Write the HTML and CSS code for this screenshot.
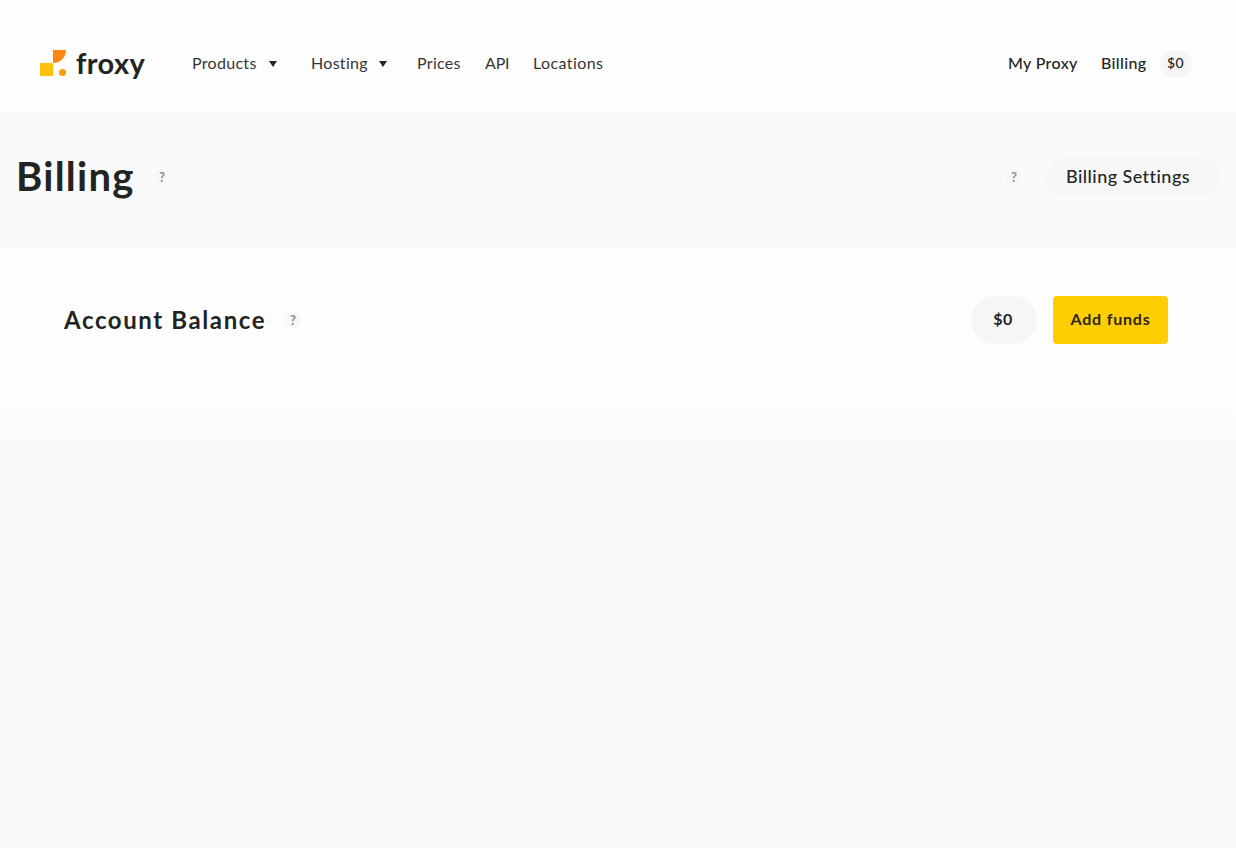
FILE: index.html
```
<!DOCTYPE html>
<html lang="en">
<head>
<meta charset="utf-8">
<title>Billing – Froxy</title>
<link rel="stylesheet" href="styles.css">
</head>
<body>
<header class="header">
  <a class="logo">
    <svg class="logo-mark" viewBox="0 0 27 27" width="27" height="27">
      <path d="M13 0h13c0 7.500-5.500 13-13 13z" fill="#ff860f"/>
      <path d="M0 13h13.300v13H0z" fill="#ffc10a"/>
      <circle cx="22.500" cy="22.500" r="3.600" fill="#ff9c0c"/>
    </svg>
    <span class="logo-name">froxy</span>
  </a>
  <nav class="nav">
    <a class="nav-products">Products</a>
    <svg class="caret caret-products" viewBox="0 0 8 6"><path d="M0 0h8L4 6z"/></svg>
    <a class="nav-hosting">Hosting</a>
    <svg class="caret caret-hosting" viewBox="0 0 8 6"><path d="M0 0h8L4 6z"/></svg>
    <a class="nav-prices">Prices</a>
    <a class="nav-api">API</a>
    <a class="nav-locations">Locations</a>
  </nav>
  <div class="account">
    <a class="account-proxy">My Proxy</a>
    <a class="account-billing">Billing</a>
    <span class="account-balance">$0</span>
  </div>
</header>
<main>
  <section class="title-bar">
    <h1>Billing</h1>
    <span class="hint">?</span>
    <span class="hint hint-settings">?</span>
    <a class="settings">Billing Settings</a>
  </section>
  <section class="balance">
    <h2>Account Balance</h2>
    <span class="hint">?</span>
    <span class="amount">$0</span>
    <button class="add-funds">Add funds</button>
  </section>
</main>
</body>
</html>
```
FILE: styles.css
```
* { box-sizing: border-box; }
body {
  margin: 0;
  min-height: 848px;
  background: #fafafa;
  color: #222423;
  font-family: Lato, "Open Sans", sans-serif;
  white-space: nowrap;
}
.header {
  display: flex;
  align-items: center;
  height: 112px;
  padding: 14px 44px 0 40px;
  background: #fefefe;
  font-size: 16px;
  line-height: 24px;
}
.logo { display: flex; align-items: center; width: 152px; }
.logo-mark { display: block; flex: none; margin-right: 9px; }
.logo-name { font-size: 29px; font-weight: 700; line-height: 32px; letter-spacing: 0.4px; }
.nav { display: flex; align-items: center; color: #343635; }
.nav a { letter-spacing: 0.3px; }
.nav .nav-api { width: 48px; letter-spacing: -0.2px; }
.nav .nav-locations { letter-spacing: 0.4px; }
.nav-products { width: 77px; }
.nav-hosting { width: 68px; }
.nav-prices { width: 68px; }
.caret { width: 8px; height: 6px; margin-top: 1px; fill: #222423; }
.caret-products { margin-right: 34px; }
.caret-hosting { margin-right: 30px; }
.account {
  display: flex;
  align-items: center;
  margin-left: auto;
  font-weight: 500;
  letter-spacing: 0.35px;
}
.account-proxy { width: 93px; }
.account-billing { width: 59px; }
.account-balance {
  width: 32px;
  height: 28px;
  margin-top: 1px;
  padding-right: 1px;
  border-radius: 14px;
  background: #f6f6f7;
  font-size: 14px;
  line-height: 26px;
  text-align: center;
}
.title-bar {
  display: flex;
  align-items: center;
  height: 135px;
  padding: 0 16px 6px;
}
h1 {
  width: 138px;
  margin: 0;
  padding-bottom: 2px;
  font-size: 40px;
  font-weight: 700;
  line-height: 46px;
  letter-spacing: 1.25px;
}
.hint {
  width: 16px;
  height: 16px;
  border-radius: 8px;
  background: #f7f7f8;
  color: #8c8c8c;
  font-size: 13px;
  font-weight: 700;
  line-height: 16px;
  text-align: center;
}
.hint-settings { margin: 0 24px 0 auto; }
.settings {
  width: 174px;
  height: 38px;
  padding-left: 20px;
  border-radius: 19px;
  background: #f6f6f6;
  font-size: 18px;
  font-weight: 500;
  font-variant-ligatures: none;
  line-height: 36px;
  letter-spacing: 0.45px;
}
.balance {
  display: flex;
  align-items: center;
  height: 203px;
  padding: 0 68px 57px 64px;
  background: linear-gradient(#fdfdfd 0, #fefefe 70%, #fafafa 100%);
}
h2 {
  width: 221px;
  margin: 0;
  font-size: 24px;
  font-weight: 700;
  line-height: 32px;
  letter-spacing: 1.6px;
}
.amount {
  width: 66px;
  height: 48px;
  margin: 0 16px 0 auto;
  padding-right: 2px;
  border-radius: 24px;
  background: #f6f6f7;
  font-size: 16px;
  font-weight: 700;
  line-height: 46px;
  letter-spacing: 0.4px;
  text-align: center;
}
.add-funds {
  width: 115px;
  height: 48px;
  padding: 0 0 2px;
  border: 0;
  border-radius: 4px;
  background: #ffcd04;
  color: #2c2716;
  font: 700 16px/46px Lato, "Open Sans", sans-serif;
  letter-spacing: 0.8px;
}
```
